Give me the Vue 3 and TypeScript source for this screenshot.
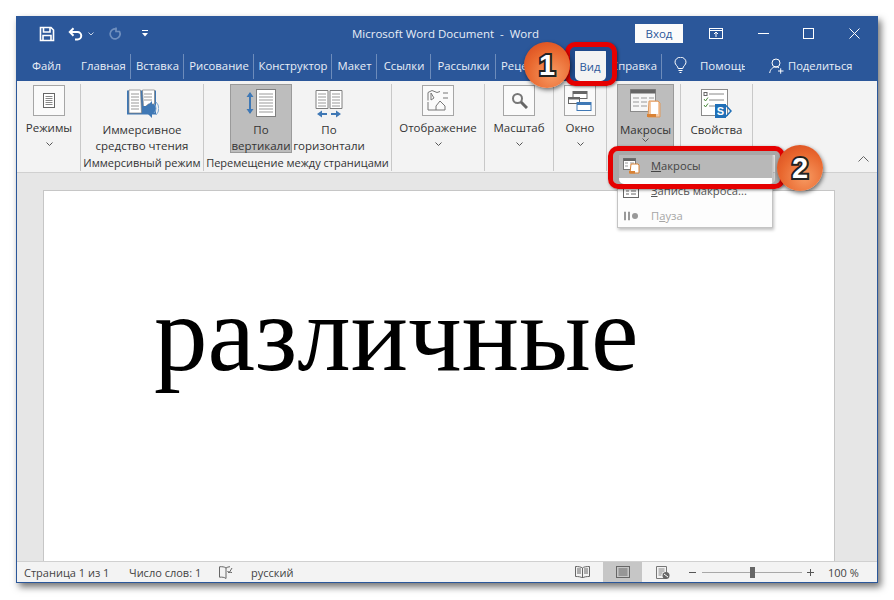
<script setup lang="ts">
interface Tab { label: string; width: number; kind?: string }
const tabs: Tab[] = [
  { label: 'Файл', width: 59, kind: 'plain' },
  { label: 'Главная', width: 55 },
  { label: 'Вставка', width: 53 },
  { label: 'Рисование', width: 70 },
  { label: 'Конструктор', width: 78 },
  { label: 'Макет', width: 45 },
  { label: 'Ссылки', width: 54 },
  { label: 'Рассылки', width: 65 },
  { label: 'Рецензирование', width: 78, kind: 'left plain' },
  { label: 'Вид', width: 32, kind: 'active' },
  { label: 'Справка', width: 56, kind: 'right' },
]
</script>

<template>
  <div class="stage">
    <div class="window">
      <header class="titlebar">
        <div class="qat">
          <svg class="ic-save" width="16" height="16" viewBox="0 0 16 16" fill="none" stroke="#fff" stroke-width="1.6">
            <path d="M1.5 1.5h10.5l2.5 2.5v10.5h-13z" />
            <path d="M4.5 1.5v4.5h6.5v-4.5M4 14.5v-5h8v5" />
          </svg>
          <svg class="ic-undo" width="15" height="14" viewBox="0 0 15 14" fill="none" stroke="#fff" stroke-width="2">
            <path d="M2 5h7.5a3.6 3.6 0 0 1 0 7.5H7" />
            <path d="M5.5 1.2 1.8 5l3.7 3.8" />
          </svg>
          <svg class="ic-chev" width="6" height="4" viewBox="0 0 6 4" fill="none" stroke="#c6d3e6"><path d="M.5.5 3 3 5.5.5" /></svg>
          <svg class="ic-redo" width="14" height="14" viewBox="0 0 14 14" fill="none" stroke="#6f8fbe" stroke-width="1.7">
            <path d="M11.5 4.5a5 5 0 1 1-3-2.4" />
            <path d="M8 .5v4h4" />
          </svg>
          <svg class="ic-more" width="6" height="7" viewBox="0 0 6 7" fill="#fff"><rect width="6" height="1" /><path d="M0 3h6L3 6.5z" /></svg>
        </div>
        <div class="doc-title">Microsoft Word Document&nbsp; -&nbsp; Word</div>
        <div class="signin">Вход</div>
        <svg class="ic-display" width="14" height="11" viewBox="0 0 14 11" fill="none" stroke="#fff">
          <rect x=".5" y=".5" width="13" height="10" />
          <path d="M.5 2.5h13M7 9V4M5 6l2-2 2 2" />
        </svg>
        <svg class="ic-min" width="11" height="1" viewBox="0 0 11 1"><rect width="11" height="1" fill="#fff" /></svg>
        <svg class="ic-max" width="11" height="11" viewBox="0 0 11 11" fill="none" stroke="#fff"><rect x=".5" y=".5" width="10" height="10" /></svg>
        <svg class="ic-close" width="11" height="11" viewBox="0 0 11 11" fill="none" stroke="#fff"><path d="M.5.5l10 10M10.5.5l-10 10" /></svg>
      </header>

      <nav class="tabs">
        <div
          v-for="t in tabs"
          :key="t.label"
          class="tab"
          :class="t.kind"
          :style="{ width: t.width + 'px' }"
        >
          <span>{{ t.label }}</span>
        </div>
        <svg class="ic-bulb" width="13" height="16" viewBox="0 0 13 16" fill="none" stroke="#fff">
          <path d="M4.2 11.5C4 9 1 8 1 5.2a5.5 5 0 0 1 11 0c0 2.8-3 3.8-3.2 6.3z" />
          <path d="M4.5 13.5h4M5.5 15.5h2" />
        </svg>
        <div class="help">Помощь</div>
        <svg class="ic-person" width="15" height="16" viewBox="0 0 15 16" fill="none" stroke="#fff">
          <circle cx="7" cy="5" r="4" />
          <path d="M.7 15c.6-3.6 2.6-6 6.3-6 1.2 0 2.2.3 3 .8M9 13h5.5M11.7 10.3v5.4" />
        </svg>
        <div class="share">Поделиться</div>
      </nav>

      <section class="ribbon">
        <div class="group g1">
          <div class="btn">
            <div class="box">
              <svg width="12" height="15" viewBox="0 0 12 15" fill="none" stroke="#666">
                <rect x=".5" y=".5" width="11" height="14" fill="#fff" />
                <path d="M2.5 3.5h7M2.5 5.5h7M2.5 7.5h7M2.5 9.5h7M2.5 11.5h7" stroke="#888" />
              </svg>
            </div>
            <div class="lbl-small">Режимы</div>
            <svg class="chev" width="7" height="4" viewBox="0 0 7 4" fill="none" stroke="#555"><path d="M.5.5 3.5 3.5 6.5.5" /></svg>
          </div>
        </div>

        <div class="group g2">
          <div class="btn big w-imm">
            <svg class="bigic" width="33" height="30" viewBox="0 0 33 30" fill="none">
              <path d="M1 1.5h29v24H1z" fill="#3f78b5" />
              <path d="M3 1h11.500l1 23H3zM16.500 1H28.500v14h-6l-5 4z" fill="#fff" stroke="#7f7f7f" stroke-width=".7" />
              <path d="M5 5h8M5 8h8M5 11h8M5 14h8M5 17h8M5 20h8M18 5h8M18 8h8M18 11h8" stroke="#999" />
              <path d="M17 17h4l5-5v17l-5-5h-4z" fill="#3f78b5" />
              <path d="M28 15a6 6 0 0 1 0 9M30 13a9 9 0 0 1 0 13" stroke="#7ba5cf" />
            </svg>
            <div class="lbl">Иммерсивное</div>
            <div class="lbl">средство чтения</div>
          </div>
          <div class="glabel">Иммерсивный режим</div>
        </div>

        <div class="group g3">
          <div class="row">
            <div class="btn big pressed w-vert">
              <svg class="bigic" width="32" height="30" viewBox="0 0 32 30" fill="none">
                <rect x="11.500" y=".5" width="19" height="27" fill="#fff" stroke="#7f7f7f" />
                <path d="M14 5h14M14 8h14M14 11h14M14 14h14M14 17h14M14 20h14M14 23h14" stroke="#999" />
                <path d="M5 4v20" stroke="#3f78b5" stroke-width="2" />
                <path d="M1.500 8 5 3l3.500 5zM1.500 20 5 25l3.500-5z" fill="#3f78b5" />
              </svg>
              <div class="lbl">По</div>
              <div class="lbl">вертикали</div>
            </div>
            <div class="btn big w-hor">
              <svg class="bigic" width="28" height="28" viewBox="0 0 28 28" fill="none">
                <path d="M1 .5h12v18H1zM15 .5h12v18H15z" fill="#fff" stroke="#7f7f7f" />
                <path d="M3 4h8M3 7h8M3 10h8M3 13h8M3 16h8M17 4h8M17 7h8M17 10h8M17 13h8M17 16h8" stroke="#999" />
                <path d="M5 24h7M16 24h7" stroke="#3f78b5" stroke-width="2" />
                <path d="M7 20.500 2 24l5 3.500zM21 20.500l5 3.500-5 3.500z" fill="#3f78b5" />
              </svg>
              <div class="lbl">По</div>
              <div class="lbl">горизонтали</div>
            </div>
          </div>
          <div class="glabel">Перемещение между страницами</div>
        </div>

        <div class="group g4">
          <div class="btn">
            <div class="box">
              <svg width="22" height="21" viewBox="0 0 22 21" fill="none" stroke="#777">
                <path d="M1 10.500V2.500l4-2 5 2 3-1M16 3h5M16 8h5M1 12v8h8" />
                <path d="M4 3l3 5-3 2zM13 11l5 5v4h-9v-4z" />
              </svg>
            </div>
            <div class="lbl-small">Отображение</div>
            <svg class="chev" width="7" height="4" viewBox="0 0 7 4" fill="none" stroke="#555"><path d="M.5.5 3.500 3.500 6.500.5" /></svg>
          </div>
        </div>

        <div class="group g5">
          <div class="btn">
            <div class="box">
              <svg width="17" height="17" viewBox="0 0 17 17" fill="none">
                <circle cx="6.500" cy="6.500" r="4.500" stroke="#777" stroke-width="2" />
                <path d="M10 10l6 6" stroke="#666" stroke-width="3" />
              </svg>
            </div>
            <div class="lbl-small">Масштаб</div>
            <svg class="chev" width="7" height="4" viewBox="0 0 7 4" fill="none" stroke="#555"><path d="M.5.5 3.500 3.500 6.500.5" /></svg>
          </div>
        </div>

        <div class="group g6">
          <div class="btn">
            <div class="box">
              <svg width="24" height="20" viewBox="0 0 24 20" fill="none">
                <rect x="5" y=".5" width="14" height="7" fill="#fff" stroke="#666" />
                <rect x="5" y=".5" width="14" height="2.500" fill="#666" />
                <rect x=".5" y="6.500" width="11" height="6" fill="#fff" stroke="#666" />
                <rect x=".5" y="6.500" width="11" height="2" fill="#666" />
                <rect x="9" y="11.500" width="14" height="8" fill="#fff" stroke="#3f78b5" />
                <rect x="9" y="11.500" width="14" height="2.500" fill="#3f78b5" />
              </svg>
            </div>
            <div class="lbl-small">Окно</div>
            <svg class="chev" width="7" height="4" viewBox="0 0 7 4" fill="none" stroke="#555"><path d="M.5.5 3.500 3.500 6.500.5" /></svg>
          </div>
        </div>

        <div class="group g7">
          <div class="btn big pressed w-mac">
            <svg class="bigic" width="32" height="30" viewBox="0 0 32 30" fill="none">
              <rect x=".5" y=".5" width="25" height="22" fill="#f7f7f7" stroke="#8a8a8a" />
              <rect x=".5" y=".5" width="25" height="4" fill="#666" />
              <path d="M3 9h6M11 9h6M19 9h5M3 13h6M11 13h6M19 13h5M3 17h6M11 17h6" stroke="#999" />
              <path d="M19 12h9l2 2v14H18z" fill="#f4c9a4" stroke="#e09a5c" />
              <path d="M21 13h7v12H21z" fill="#fff" />
              <path d="M17 25h9v3h-9z" fill="#d98234" />
            </svg>
            <div class="lbl">Макросы</div>
            <svg class="chev-sm" width="7" height="4" viewBox="0 0 7 4" fill="none" stroke="#555"><path d="M.5.5 3.500 3.500 6.500.5" /></svg>
          </div>
        </div>

        <div class="group g8">
          <div class="btn big w-prop">
            <svg class="bigic" width="31" height="30" viewBox="0 0 31 30" fill="none">
              <rect x=".5" y=".5" width="26" height="26" fill="#fff" stroke="#8a8a8a" />
              <path d="M8 5h15M8 11h15M8 17h6" stroke="#888" />
              <rect x="3" y="3.500" width="3" height="3" stroke="#666" />
              <path d="M3 10l1.500 2L7 8.500M3 16l1.500 2L7 14.500" stroke="#4b8a3c" />
              <path d="M14 15h11v14H14z" fill="#1f6fb8" />
              <path d="M25 16.500l5 5.500-5 5.500" stroke="#1f6fb8" stroke-width="1.500" />
              <text x="19.500" y="26" text-anchor="middle" class="sp-s">S</text>
            </svg>
            <div class="lbl">Свойства</div>
          </div>
        </div>

        <svg class="collapse" width="11" height="6" viewBox="0 0 11 6" fill="none" stroke="#666"><path d="M.5 5.500 5.500.5l5 5" /></svg>
      </section>

      <main class="docarea">
        <div class="page">различные</div>
      </main>

      <footer class="status">
        <span class="st1">Страница 1 из 1</span>
        <span class="st2">Число слов: 1</span>
        <svg class="st3" width="14" height="13" viewBox="0 0 14 13" fill="none" stroke="#666">
          <path d="M7 2C5.500.8 3 .5.500.8v10.400C3 11 5.500 11.200 7 12.500V2zM7 2c1-.8 2.500-1.200 4-1.300M9 6c1 0 2 .5 4 .5" />
          <path d="M8.500 5 10 7l3-5" />
        </svg>
        <span class="st4">русский</span>
        <svg class="st5" width="15" height="12" viewBox="0 0 15 12" fill="none" stroke="#666">
          <path d="M7.500 2C6 .8 3 .5.500.5v10c3 0 5.500.3 7 1.500 1.500-1.200 4-1.500 7-1.500V.5c-3 0-6 .3-7 1.500zM7.500 2v10M2 3h4M2 5h4M2 7h4M9 3h4M9 5h4M9 7h4" />
        </svg>
        <div class="st6">
          <svg width="14" height="12" viewBox="0 0 14 12" fill="none" stroke="#666">
            <rect x=".5" y=".5" width="13" height="11" />
            <path d="M2.500 3h9M2.500 5h9M2.500 7h9M2.500 9h9" />
          </svg>
        </div>
        <svg class="st7" width="14" height="13" viewBox="0 0 14 13" fill="none">
          <path d="M.5 .5h10v12H.5z" stroke="#777" />
          <path d="M2.500 3h6M2.500 5h6M2.500 7h4M2.500 9h3" stroke="#888" />
          <circle cx="10" cy="9.500" r="3.500" fill="#666" />
          <path d="M8 8l4 3" stroke="#fff" />
        </svg>
        <div class="zoombar">
          <span class="zm minus"></span>
          <div class="slider"><span class="thumb"></span></div>
          <span class="zm plus"></span>
        </div>
        <span class="st8">100 %</span>
      </footer>

      <div class="menu">
        <div class="mi hot">
          <svg class="mic" width="17" height="16" viewBox="0 0 17 16" fill="none">
            <rect x=".5" y=".5" width="12" height="11" fill="#fff" stroke="#777" />
            <rect x=".5" y=".5" width="12" height="2.500" fill="#666" />
            <path d="M2 5h3M7 5h4M2 8h3" stroke="#999" />
            <path d="M8 6h7l1 1v8H7z" fill="#fff" stroke="#d98234" />
            <path d="M6 13h6v2.500H6z" fill="#d98234" />
          </svg>
          <span><u>М</u>акросы</span>
        </div>
        <div class="mi">
          <svg class="mic" width="16" height="14" viewBox="0 0 16 14" fill="none" stroke="#666">
            <rect x=".5" y=".5" width="15" height="13" fill="#fff" />
            <path d="M.5 3.500h15M3 7h3M8 7h5M3 10h3M8 10h5" />
          </svg>
          <span><u>З</u>апись макроса...</span>
        </div>
        <div class="mi off">
          <svg class="mic" width="16" height="9" viewBox="0 0 16 9">
            <rect x="1" width="2" height="9" fill="#999" />
            <rect x="5" width="2" height="9" fill="#999" />
            <circle cx="12" cy="4.500" r="3" fill="#999" />
          </svg>
          <span>П<u>а</u>уза</span>
        </div>
      </div>

      <div class="hl hl-tab"></div>
      <div class="hl hl-menu"></div>
      <div class="badge b1">1</div>
      <div class="badge b2">2</div>
    </div>
  </div>
</template>

<style>
html, body { margin: 0; background: #fff; }
</style>

<style scoped>
.stage {
  width: 894px;
  height: 600px;
  padding: 16px 16px 16px 16px;
  box-sizing: border-box;
  font-family: "Open Sans", "Noto Sans", sans-serif;
  font-size: 11.5px;
  color: #333;
  overflow: hidden;
}
.window {
  position: relative;
  width: 862px;
  height: 567px;
  box-sizing: border-box;
  border: 1px solid #2b579a;
  background: #f3f3f3;
  display: flex;
  flex-direction: column;
  box-shadow: 3px 4px 7px rgba(0, 0, 0, .55);
}
.titlebar {
  height: 33px;
  background: #2b579a;
  display: flex;
  align-items: center;
  flex: none;
  color: #fff;
}
.qat { display: flex; align-items: center; width: 335px; padding-left: 22px; box-sizing: border-box; flex: none; }
.ic-undo { margin-left: 13px; }
.ic-chev { margin-left: 5px; }
.ic-redo { margin-left: 14px; }
.ic-more { margin-left: 20px; }
.doc-title { font-size: 11.5px; width: 283px; flex: none; color: #e8eef7; }
.signin {
  width: 48px;
  height: 19px;
  background: #fbfbfb;
  color: #2b579a;
  font-size: 11.5px;
  line-height: 19px;
  text-align: center;
  flex: none;
}
.ic-display { margin-left: 26px; flex: none; }
.ic-min { margin-left: 35px; flex: none; }
.ic-max { margin-left: 34px; flex: none; }
.ic-close { margin-left: 35px; flex: none; }

.tabs {
  height: 31px;
  background: #2b579a;
  display: flex;
  align-items: stretch;
  flex: none;
  color: #e8eef7;
}
.tab {
  position: relative;
  box-sizing: border-box;
  flex: none;
  display: flex;
  align-items: center;
  justify-content: center;
  overflow: hidden;
  white-space: nowrap;
  font-size: 11.3px;
}
.tab::after {
  content: "";
  position: absolute;
  right: 0;
  top: 4px;
  bottom: 2px;
  width: 1px;
  background: #6d8cbb;
}
.tab.plain::after, .tab.active::after { display: none; }
.tab.left { justify-content: flex-start; padding-left: 5px; }
.tab.right { justify-content: flex-end; padding-right: 5px; }
.tab.active { background: #f3f3f3; color: #2b579a; margin-top: 1px; }
.ic-bulb { margin: 7px 0 0 12px; flex: none; }
.help {
  margin-left: 13px;
  width: 45px;
  overflow: hidden;
  white-space: nowrap;
  line-height: 31px;
  flex: none;
}
.ic-person { margin: 8px 0 0 24px; flex: none; }
.share { margin-left: 4px; line-height: 31px; white-space: nowrap; flex: none; font-size: 11.2px; }

.ribbon {
  height: 92px;
  flex: none;
  display: flex;
  position: relative;
  border-bottom: 1px solid #d0d0d0;
  box-sizing: border-box;
  background: #f3f3f3;
}
.group {
  box-sizing: border-box;
  height: 87px;
  margin-top: 3px;
  border-right: 1px solid #c8c8c8;
  flex: none;
  display: flex;
  flex-direction: column;
  position: relative;
}
.row { display: flex; }
.g1 { width: 64px; padding-left: 6px; }
.g2 { width: 123px; align-items: center; }
.g3 { width: 188px; padding-left: 26px; }
.g4 { width: 93px; align-items: center; }
.g5 { width: 69px; align-items: center; }
.g6 { width: 53px; align-items: center; }
.g7 { width: 74px; padding-left: 10px; }
.g8 { width: 72px; align-items: center; }
.g1 .btn { width: 52px; }
.btn {
  display: flex;
  flex-direction: column;
  align-items: center;
  box-sizing: border-box;
  white-space: nowrap;
}
.box {
  width: 32px;
  height: 31px;
  box-sizing: border-box;
  margin-top: 1px;
  border: 1px solid #a6a6a6;
  background: #fafafa;
  display: flex;
  align-items: center;
  justify-content: center;
}
.lbl-small { line-height: 16px; margin-top: 4px; }
.chev { margin-top: 6px; }
.chev-sm { margin-top: 0; }
.big { height: 69px; }
.bigic { margin-top: 5px; margin-bottom: 3px; height: 30px; flex: none; }
.lbl { line-height: 16px; }
.sp-s { fill: #fff; font-family: "Liberation Sans", sans-serif; font-weight: 700; font-size: 11px; }
.w-imm { width: 118px; }
.w-vert { width: 62px; }
.w-hor { width: 74px; }
.w-mac { width: 57px; }
.w-prop { width: 60px; }
.pressed {
  background: #bdbdbd;
  border: 1px solid #9a9a9a;
}
.pressed .bigic { margin-top: 4px; }
.glabel {
  position: absolute;
  left: 0;
  right: 0;
  top: 71px;
  text-align: center;
  line-height: 16px;
  white-space: nowrap;
  font-size: 11px;
}
.collapse { position: absolute; left: 841px; top: 75px; }

.docarea {
  flex: 1;
  min-height: 0;
  background: #e6e6e6;
  padding: 17px 42px 0 26px;
  overflow: hidden;
}
.page {
  height: 100%;
  box-sizing: border-box;
  background: #fff;
  border: 1px solid #c6c6c6;
  border-bottom: 0;
  font-family: "Liberation Serif", serif;
  font-size: 107px;
  line-height: 122px;
  padding: 82px 0 0 110px;
  color: #000;
  white-space: nowrap;
}

.status {
  height: 20px;
  flex: none;
  display: flex;
  align-items: center;
  background: #f3f3f3;
  border-top: 1px solid #d0d0d0;
  font-size: 11px;
  color: #444;
  white-space: nowrap;
}
.st1 { margin-left: 7px; width: 105px; flex: none; }
.st2 { width: 90px; flex: none; }
.st3 { flex: none; }
.st4 { margin-left: 18px; width: 324px; flex: none; }
.st5 { flex: none; }
.st6 {
  margin-left: 13px;
  width: 39px;
  height: 100%;
  background: #c6c6c6;
  display: flex;
  align-items: center;
  justify-content: center;
  flex: none;
}
.st7 { margin-left: 14px; flex: none; }
.zoombar { margin-left: 19px; display: flex; align-items: center; flex: none; }
.zm { display: block; position: relative; width: 7px; height: 7px; flex: none; }
.zm::before {
  content: "";
  position: absolute;
  left: 0;
  right: 0;
  top: 3px;
  height: 1px;
  background: #555;
}
.plus::after {
  content: "";
  position: absolute;
  top: 0;
  bottom: 0;
  left: 3px;
  width: 1px;
  background: #555;
}
.slider {
  width: 100px;
  height: 1px;
  margin: 0 5px 0 6px;
  background: #a8a8a8;
  position: relative;
}
.thumb {
  position: absolute;
  left: 48px;
  top: -5px;
  width: 5px;
  height: 11px;
  background: #666;
}
.st8 { margin-left: 14px; }

.menu {
  position: absolute;
  left: 600px;
  top: 136px;
  width: 156px;
  height: 75px;
  box-sizing: border-box;
  background: #fdfdfd;
  border: 1px solid #c4c4c4;
  border-top: 0;
  box-shadow: 1px 2px 3px rgba(0, 0, 0, .25);
  display: flex;
  flex-direction: column;
  font-size: 11.2px;
  color: #555;
}
.mi {
  height: 25px;
  display: flex;
  align-items: center;
  position: relative;
  padding-left: 33px;
  flex: none;
}
.mic { position: absolute; left: 5px; top: 50%; transform: translateY(-50%); }
.hot { background: #b8b8b8; color: #444; }
.off { color: #a6a6a6; }

.hl {
  position: absolute;
  box-sizing: border-box;
  border: 5px solid #e50000;
  border-radius: 10px;
}
.hl-tab {
  left: 548px;
  top: 25px;
  width: 52px;
  height: 44px;
  box-shadow: 1px 1px 3px rgba(0, 0, 0, .5), inset 5px 0 0 #1f4a8c, inset -6px 0 0 #1f4a8c, inset 0 4px 0 #1f4a8c;
}
.hl-menu {
  left: 591px;
  top: 129px;
  width: 177px;
  height: 43px;
  box-shadow: 1px 1px 3px rgba(0, 0, 0, .5), inset 6px 0 0 #a8a8a8, inset -5px 0 0 #a8a8a8, inset 0 4px 0 #a8a8a8;
}

.badge {
  position: absolute;
  width: 46px;
  height: 46px;
  border-radius: 50%;
  background: radial-gradient(circle at 60% 70%, #f79a62 0%, #e9682f 55%, #d5431a 100%);
  box-shadow: 1px 2px 4px rgba(0, 0, 0, .55);
  color: #fff;
  font-family: "Liberation Sans", sans-serif;
  font-weight: 700;
  font-size: 29px;
  line-height: 46px;
  text-align: center;
  -webkit-text-stroke: 4px #222;
  paint-order: stroke fill;
}
.b1 { left: 507px; top: 25px; }
.b2 { left: 760px; top: 128px; }
</style>
